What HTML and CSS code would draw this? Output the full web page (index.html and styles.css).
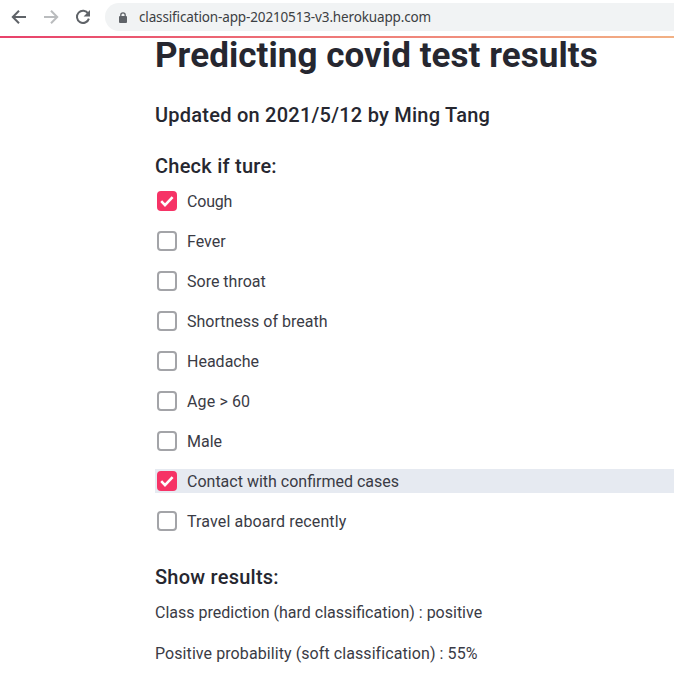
FILE: index.html
```html
<!DOCTYPE html>
<html lang="en">
<head>
<meta charset="utf-8">
<title>Predicting covid test results</title>
<link rel="stylesheet" href="styles.css">
</head>
<body>
<header class="toolbar">
  <svg class="nav-icon" viewBox="0 0 16 16"><path d="M15 8H2M8 1.8 1.8 8 8 14.2"/></svg>
  <svg class="nav-icon nav-icon--off" viewBox="0 0 16 16"><path d="M1 8h13M8 1.8 14.2 8 8 14.2"/></svg>
  <svg class="nav-icon" viewBox="0 0 16 16"><path d="M13.2 4.6A6.1 6.1 0 1 0 13.9 9.6"/><path class="solid" d="M15 1v6.4H8.6z"/></svg>
  <div class="address">
    <svg class="lock" viewBox="0 0 8 11"><path class="shackle" d="M1.8 5V3a2.2 2.2 0 0 1 4.4 0v2"/><rect y="4" width="8" height="7" rx="1"/></svg>
    <span class="url">classification-app-20210513-v3.herokuapp.com</span>
  </div>
</header>
<div class="decoration"></div>
<main class="page">
  <h1>Predicting covid test results</h1>
  <h3 class="updated">Updated on 2021/5/12 by Ming Tang</h3>
  <h3 class="prompt">Check if ture:</h3>
  <div class="options">
    <label class="option"><i class="box box--on"><svg viewBox="0 0 20 20"><path d="m4.2 10.2 3.8 4 7.6-8"/></svg></i><span class="snug">Cough</span></label>
    <label class="option"><i class="box"></i><span>Fever</span></label>
    <label class="option"><i class="box"></i><span>Sore throat</span></label>
    <label class="option"><i class="box"></i><span>Shortness of breath</span></label>
    <label class="option"><i class="box"></i><span>Headache</span></label>
    <label class="option"><i class="box"></i><span class="wide">Age &gt; 60</span></label>
    <label class="option"><i class="box"></i><span>Male</span></label>
    <label class="option option--focus"><i class="box box--on"><svg viewBox="0 0 20 20"><path d="m4.2 10.2 3.8 4 7.6-8"/></svg></i><span>Contact with confirmed cases</span></label>
    <label class="option"><i class="box"></i><span class="wide">Travel aboard recently</span></label>
  </div>
  <h3 class="results">Show results:</h3>
  <p class="class-line">Class prediction (hard classification) : positive</p>
  <p class="prob-line">Positive probability (soft classification) : 55%</p>
</main>
</body>
</html>
```
FILE: styles.css
```css
* { box-sizing: border-box; }
body {
  margin: 0;
  height: 687px;
  overflow: hidden;
  background: #fff;
  color: #262730;
  font: 16px/24px Roboto, "Liberation Sans", sans-serif;
}
.toolbar {
  display: flex;
  align-items: center;
  height: 36px;
  padding: 3px 0 5px 11px;
  gap: 16px;
}
.nav-icon {
  flex: none;
  width: 16px;
  height: 16px;
  fill: none;
  stroke: #5f6368;
  stroke-width: 2;
}
.nav-icon--off { stroke: #babcbe; }
.nav-icon .solid { fill: #5f6368; stroke: none; }
.address {
  display: flex;
  align-items: center;
  flex: 1;
  height: 28px;
  margin-left: -2px;
  padding-left: 14px;
  gap: 12px;
  border-radius: 14px 0 0 14px;
  background: #f1f3f4;
}
.lock { width: 8px; height: 11px; fill: #5f6368; }
.shackle { fill: none; stroke: #5f6368; stroke-width: 1.3; }
.url {
  font: 13.5px/20px "Noto Sans", sans-serif;
  letter-spacing: -0.14px;
  color: #3c4043;
}
.decoration {
  height: 2px;
  background: linear-gradient(90deg, #e8416b, #f08a7c 65%, #f2b184);
}
.page { padding-left: 155px; }
h1, h3, p { margin: 0; white-space: nowrap; }
h1 { font-size: 35px; line-height: 42px; font-weight: 700; letter-spacing: 0.06px; margin-top: -3px; }
h3 { font-size: 20px; line-height: 26px; font-weight: 500; letter-spacing: 0.24px; }
.updated { margin-top: 25px; }
.prompt { margin-top: 25px; }
.options { display: flex; flex-direction: column; gap: 16px; margin-top: 10px; }
.option { display: flex; align-items: center; height: 24px; padding-left: 2px; gap: 10px; white-space: nowrap; }
.option span { padding-top: 2px; color: #3a3b45; }
.option .snug { letter-spacing: -0.2px; }
.option .wide { letter-spacing: 0.13px; }
.option--focus { background: #e6eaf1; }
.box {
  flex: none;
  width: 20px;
  height: 20px;
  border: 2px solid #a3a4a8;
  border-radius: 4px;
  background: #fff;
}
.box--on { border: 0; background: #f63366; }
.box svg { display: block; fill: none; stroke: #fff; stroke-width: 2.6; }
.results { margin-top: 31px; }
p { color: #3a3b45; }
.class-line { margin-top: 11px; }
.prob-line { margin-top: 17px; letter-spacing: 0.08px; }
```
